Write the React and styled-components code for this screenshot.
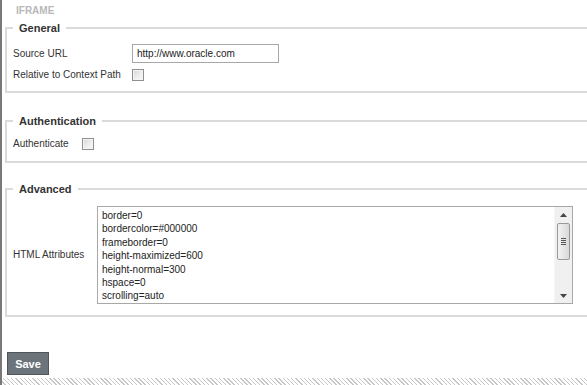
import React from "react";
import styled, { createGlobalStyle } from "styled-components";

const GlobalStyle = createGlobalStyle`
  html, body {
    margin: 0;
    padding: 0;
    background: #ffffff;
    overflow: hidden;
  }
  body {
    font-family: "Liberation Sans", Arial, sans-serif;
    font-size: 10px;
    color: #333333;
  }
`;

const Page = styled.div`
  width: 587px;
  height: 385px;
  box-sizing: border-box;
  border-left: 2px solid #787878;
  display: flex;
  flex-direction: column;
  position: relative;
  overflow: hidden;
`;

const Title = styled.div`
  font-size: 10px;
  font-weight: bold;
  color: #b8b8b8;
  margin: 5px 0 0 14px;
  line-height: 11px;
  height: 11px;
`;

const Group = styled.fieldset`
  margin: ${(p) => p.top}px 0 0 3px;
  width: 620px;
  box-sizing: border-box;
  border: 2px solid #dadada;
  padding: ${(p) => p.padTop}px 7px ${(p) => p.padBottom}px 6px;
  min-width: 0;
`;

const Legend = styled.legend`
  font-size: 11px;
  font-weight: bold;
  color: #333333;
  line-height: 14px;
  padding: 0 6px;
  margin-left: 0;
`;

const Rows = styled.div`
  display: grid;
  grid-template-columns: ${(p) => p.labelWidth}px auto;
  row-gap: ${(p) => p.gap || 0}px;
  align-items: center;
  justify-content: start;
`;

const Label = styled.label`
  font-size: 10px;
  color: #333333;
  line-height: 12px;
  white-space: nowrap;
`;

const TextInput = styled.div`
  width: 147px;
  height: 19px;
  box-sizing: border-box;
  border: 1px solid #a8a8a8;
  padding: 0 4px;
  font-size: 10px;
  line-height: 17px;
  color: #222222;
`;

const CheckBox = styled.span`
  display: block;
  width: 12px;
  height: 12px;
  box-sizing: border-box;
  border: 1px solid #8e8f8f;
  background: linear-gradient(135deg, #d7d7d7 0%, #efefef 60%, #f8f8f8 100%);
  box-shadow: inset 0 0 0 1px #f4f4f4;
`;

const AreaBox = styled.div`
  width: 476px;
  height: 98px;
  box-sizing: border-box;
  border: 1px solid #a8a8a8;
  display: flex;
  background: #ffffff;
`;

const AreaText = styled.div`
  flex: 1;
  padding: 2px 4px;
  font-size: 10px;
  line-height: 13.4px;
  color: #222222;
  overflow: hidden;
  white-space: pre;
`;

const ScrollBar = styled.div`
  width: 17px;
  background: #f0f0f0;
  border-left: 1px solid #f6f6f6;
  display: flex;
  flex-direction: column;
  align-items: center;
`;

const Arrow = styled.div`
  height: 15px;
  display: flex;
  align-items: center;
  justify-content: center;
`;

const Track = styled.div`
  flex: 1;
`;

const Thumb = styled.div`
  width: 13px;
  height: 37px;
  box-sizing: border-box;
  border: 1px solid #999999;
  border-radius: 2px;
  background: linear-gradient(90deg, #f2f2f2 0%, #e6e6e6 50%, #d8d8d8 100%);
  display: flex;
  flex-direction: column;
  justify-content: center;
  align-items: center;
  gap: 1px;
  margin-top: 1px;

  span {
    display: block;
    width: 5px;
    height: 1px;
    background: #555555;
  }
`;

const Footer = styled.div`
  margin-top: 35px;
  padding-left: 5px;
`;

const SaveButton = styled.button`
  width: 42px;
  height: 23px;
  box-sizing: border-box;
  background: #6b747b;
  border: 1px solid #4f5559;
  color: #ffffff;
  font-family: "Liberation Sans", Arial, sans-serif;
  font-size: 11px;
  font-weight: bold;
  padding: 0;
`;

const Hatch = styled.div`
  position: absolute;
  left: 0;
  right: 0;
  bottom: 0;
  height: 7px;
  background: repeating-linear-gradient(
    45deg,
    #ffffff 0px,
    #ffffff 2px,
    #c8c8c8 2px,
    #c8c8c8 3px
  );
`;

const attributes = [
  "border=0",
  "bordercolor=#000000",
  "frameborder=0",
  "height-maximized=600",
  "height-normal=300",
  "hspace=0",
  "scrolling=auto",
];

export default function App() {
  return (
    <>
      <GlobalStyle />
      <Page>
        <Title>IFRAME</Title>

        <Group top={5} padTop={9} padBottom={10}>
          <Legend>General</Legend>
          <Rows labelWidth={119} gap={6}>
            <Label>Source URL</Label>
            <TextInput>http://www.oracle.com</TextInput>
            <Label>Relative to Context Path</Label>
            <CheckBox />
          </Rows>
        </Group>

        <Group top={21} padTop={10} padBottom={11}>
          <Legend>Authentication</Legend>
          <Rows labelWidth={69}>
            <Label>Authenticate</Label>
            <CheckBox />
          </Rows>
        </Group>

        <Group top={19} padTop={10} padBottom={11}>
          <Legend>Advanced</Legend>
          <Rows labelWidth={84}>
            <Label>HTML Attributes</Label>
            <AreaBox>
              <AreaText>{attributes.join("\n")}</AreaText>
              <ScrollBar>
                <Arrow>
                  <svg width="7" height="4" viewBox="0 0 7 4">
                    <path d="M0 4 L3.5 0 L7 4 Z" fill="#444" />
                  </svg>
                </Arrow>
                <Thumb>
                  <span />
                  <span />
                  <span />
                  <span />
                </Thumb>
                <Track />
                <Arrow>
                  <svg width="7" height="4" viewBox="0 0 7 4">
                    <path d="M0 0 L7 0 L3.5 4 Z" fill="#444" />
                  </svg>
                </Arrow>
              </ScrollBar>
            </AreaBox>
          </Rows>
        </Group>

        <Footer>
          <SaveButton>Save</SaveButton>
        </Footer>
        <Hatch />
      </Page>
    </>
  );
}
